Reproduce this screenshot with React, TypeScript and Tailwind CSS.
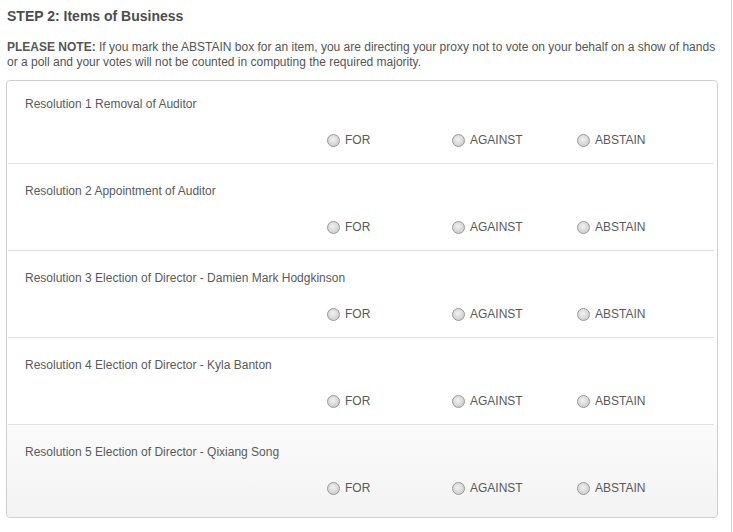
const resolutions = [
  "Resolution 1 Removal of Auditor",
  "Resolution 2 Appointment of Auditor",
  "Resolution 3 Election of Director - Damien Mark Hodgkinson",
  "Resolution 4 Election of Director - Kyla Banton",
  "Resolution 5 Election of Director - Qixiang Song",
];

const choices = ["FOR", "AGAINST", "ABSTAIN"];

function Radio({ label }: { label: string }) {
  return (
    <label className="flex w-[125px] items-center gap-[5px]">
      <span className="h-[13px] w-[13px] shrink-0 rounded-full border border-[#999] bg-[radial-gradient(circle_at_45%_40%,#f2f2f2_0%,#dadada_50%,#c4c4c4_100%)]" />
      <span className="text-[12px] leading-[14px] text-[#5a5a5a]">{label}</span>
    </label>
  );
}

function Row({ title, index, last }: { title: string; index: number; last: boolean }) {
  return (
    <div>
      {index > 0 && <div className="ml-[1px] mr-[3px] h-px bg-[#e2e2e2]" />}
      <div
        className={
          last
            ? "rounded-b-[4px] bg-gradient-to-b from-[#fbfbfb] to-[#f3f3f3] pb-[22px] pl-[18px] pt-[20px]"
            : index === 0
              ? "pb-[16px] pl-[18px] pt-[16px]"
              : "pb-[16px] pl-[18px] pt-[20px]"
        }
      >
        <div className="text-[12px] leading-[14px] text-[#5a5a5a]">{title}</div>
        <div className="mt-[22px] flex pl-[302px]">
          {choices.map((c) => (
            <Radio key={c} label={c} />
          ))}
        </div>
      </div>
    </div>
  );
}

export default function App() {
  return (
    <div className="h-[532px] w-[732px] border-r border-[#d2d2d2] bg-white pl-[6px] pt-[8px] font-['Liberation_Sans',Arial,sans-serif]">
      <h2 className="pl-[1px] text-[14px] font-bold leading-[16px] text-[#4d4d4d]">
        STEP 2: Items of Business
      </h2>
      <p className="mt-[16px] max-w-[712px] pl-[1px] text-[12px] leading-[15px] text-[#555]">
        <span className="font-bold">PLEASE NOTE:</span> If you mark the ABSTAIN box for an item, you are
        directing your proxy not to vote on your behalf on a show of hands
        <br />
        or a poll and your votes will not be counted in computing the required majority.
      </p>
      <div className="mt-[10px] w-[712px] rounded-[4px] border border-[#cfcfcf]">
        {resolutions.map((r, i) => (
          <Row key={r} title={r} index={i} last={i === resolutions.length - 1} />
        ))}
      </div>
    </div>
  );
}
